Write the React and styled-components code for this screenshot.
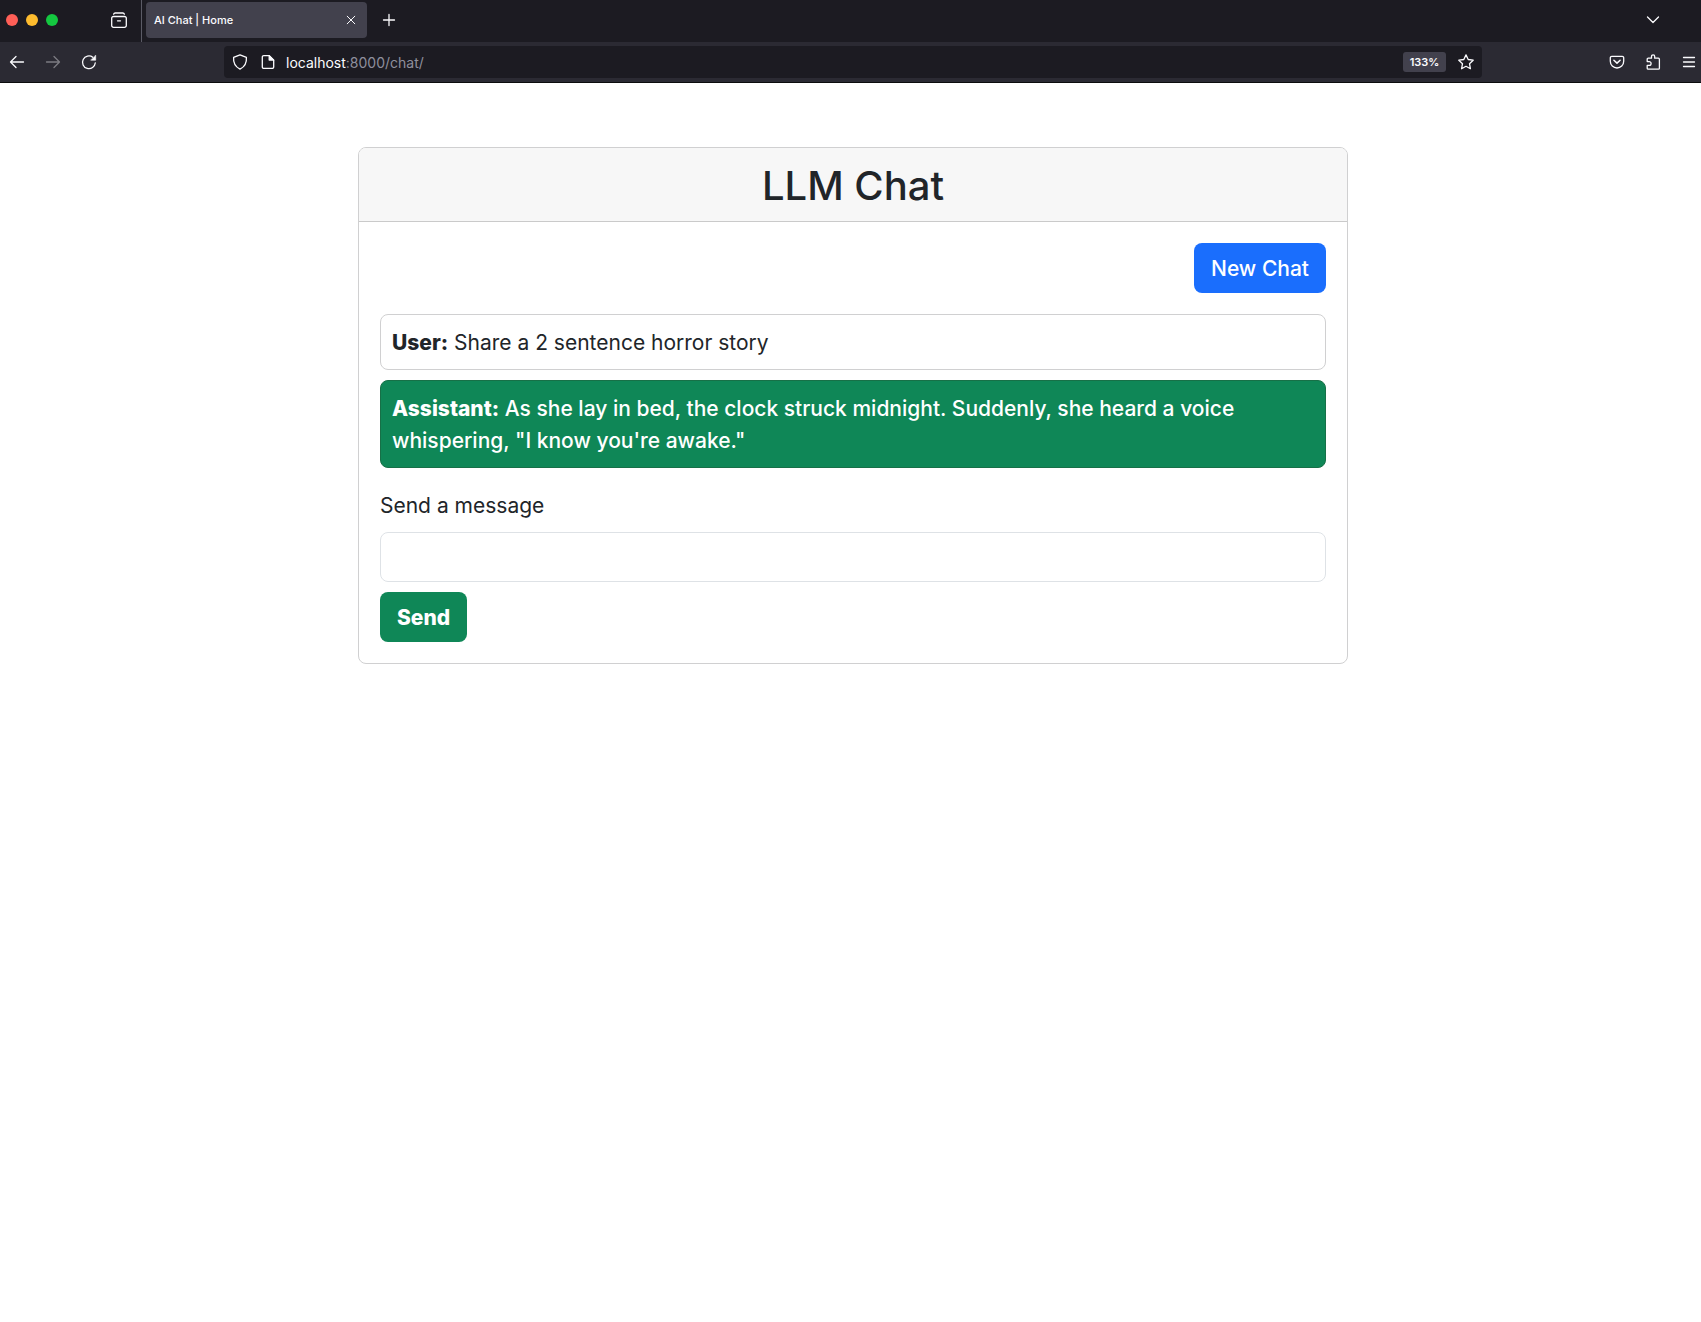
import React, { useState } from "react";
import styled, { createGlobalStyle } from "styled-components";

const GlobalStyle = createGlobalStyle`
  *, *::before, *::after { box-sizing: border-box; }
  body {
    margin: 0;
    background: #fff;
    color: #212529;
    font-family: Inter, "Liberation Sans", sans-serif;
    font-size: 21px;
    line-height: 32px;
  }
  button, input { font: inherit; }
`;

const TabBar = styled.div`
  display: flex;
  align-items: center;
  height: 42px;
  padding-bottom: 2px;
  background: #1c1b22;
  color: #fbfbfe;
`;

const WindowControls = styled.div`
  display: flex;
  gap: 8px;
  padding-left: 6px;
`;

const WindowDot = styled.button`
  width: 12px;
  height: 12px;
  padding: 0;
  border: 0;
  border-radius: 50%;
  background: ${(p) => p.$color};
`;

const IconButton = styled.button`
  display: flex;
  align-items: center;
  justify-content: center;
  flex: none;
  width: ${(p) => p.$width || 36}px;
  height: 32px;
  padding: 0;
  border: 0;
  background: none;
  color: #fbfbfe;

  &:disabled { color: #7c7b82; }
`;

const ViewArea = styled.div`
  display: flex;
  align-items: center;
  align-self: flex-start;
  height: 42px;
  margin-left: 43px;
  padding: 0 4px 2px 0;
  border-right: 1px solid #5b5b66;
`;

const Tab = styled.div`
  display: flex;
  align-items: center;
  justify-content: space-between;
  width: 221px;
  height: 36px;
  margin: 0 4px;
  padding-left: 8px;
  border-radius: 4px;
  background: #42414d;
  font-size: 11px;
  font-weight: 500;
  line-height: 16px;
`;

const TabListButton = styled.div`
  margin-left: auto;
  padding-right: 30px;
`;

const Toolbar = styled.div`
  display: flex;
  align-items: center;
  height: 41px;
  border-bottom: 1px solid #0c0c0d;
  background: #2b2a33;
  color: #fbfbfe;
`;

const NavButtons = styled.div`
  display: flex;
  flex: none;
  gap: 2px;
  width: 224px;
`;

const AddressBar = styled.div`
  display: flex;
  flex: 1;
  align-items: center;
  height: 32px;
  padding-left: 2px;
  border-radius: 4px;
  background: #1c1b22;
  font-size: 14px;
  line-height: 20px;
`;

const Address = styled.a`
  flex: 1;
  padding: 2px 0 0 4px;
  color: #8f8f9d;
  text-decoration: none;
`;

const Host = styled.span`
  color: #fbfbfe;
`;

const ZoomBadge = styled.button`
  width: 43px;
  height: 20px;
  margin-right: 4px;
  padding: 0;
  border: 0;
  border-radius: 3px;
  background: #42414d;
  color: #fbfbfe;
  font-size: 11px;
  font-weight: 600;
  line-height: 20px;
`;

const ToolbarActions = styled.div`
  display: flex;
  flex: none;
  gap: 12px;
  justify-content: flex-end;
  width: 219px;
`;

const Page = styled.main`
  display: flex;
  justify-content: center;
  padding: 64px 0 64px 5px;
`;

const Card = styled.section`
  width: 100%;
  max-width: 990px;
  overflow: hidden;
  border: 1px solid #d0d0d1;
  border-radius: 8px;
`;

const CardHeader = styled.header`
  padding: 12px 21px 10px;
  border-bottom: 1px solid #cacaca;
  background: #f7f7f7;
  text-align: center;
`;

const Title = styled.h1`
  margin: 0;
  font-size: 40px;
  font-weight: 500;
  line-height: 51px;
`;

const CardBody = styled.div`
  display: flex;
  flex-direction: column;
  gap: 21px;
  padding: 21px;
`;

const Button = styled.button`
  align-self: ${(p) => p.$align || "flex-start"};
  height: 50px;
  padding: 2px 17px 0;
  border: 0;
  border-radius: 8px;
  background: ${(p) => p.$color};
  color: #fff;
  font-weight: ${(p) => p.$weight};
`;

const Messages = styled.div`
  display: flex;
  flex-direction: column;
  gap: 10px;
`;

const Message = styled.div`
  padding: 12px 11px 10px;
  border: 1px solid ${(p) => (p.$assistant ? "#177047" : "#d0d0d1")};
  border-radius: 8px;
  background: ${(p) => (p.$assistant ? "#0f8757" : "#fff")};
  color: ${(p) => (p.$assistant ? "#fff" : "#212529")};
  font-weight: ${(p) => (p.$assistant ? 500 : 400)};
`;

const Sender = styled.strong`
  font-weight: 800;
`;

const Form = styled.form`
  display: flex;
  flex-direction: column;
  gap: 10px;
`;

const Label = styled.label`
  padding-top: 1px;
`;

const TextBox = styled.input`
  width: 100%;
  height: 50px;
  padding: 8px 16px;
  border: 1px solid #dee2e6;
  border-radius: 8px;
  background: #fff;
  color: #212529;
`;

const Icon = ({ children, size = 16 }) => (
  <svg
    width={size}
    height={size}
    viewBox="0 0 16 16"
    fill="none"
    stroke="currentColor"
    strokeWidth="1.3"
    strokeLinecap="round"
    strokeLinejoin="round"
    aria-hidden="true"
  >
    {children}
  </svg>
);

const messages = [
  { role: "User", text: "Share a 2 sentence horror story" },
  {
    role: "Assistant",
    text: 'As she lay in bed, the clock struck midnight. Suddenly, she heard a voice whispering, "I know you\'re awake."',
  },
];

function BrowserChrome() {
  return (
    <div>
      <TabBar>
        <WindowControls>
          <WindowDot $color="#ff5f57" aria-label="Close window" />
          <WindowDot $color="#febc2e" aria-label="Minimize window" />
          <WindowDot $color="#14c840" aria-label="Zoom window" />
        </WindowControls>
        <ViewArea>
          <IconButton aria-label="View recent browsing">
            <Icon>
              <path d="M2.500 4.500h11a1.800 1.800 0 0 1 1.800 1.800v7.200a1.800 1.800 0 0 1-1.800 1.800h-11a1.800 1.800 0 0 1-1.800-1.800V6.300a1.800 1.800 0 0 1 1.800-1.800z" />
              <path d="M2.600 2.200Q3 1 4.200 1h7.600Q13 1 13.400 2.200M6.500 8.800h3" />
            </Icon>
          </IconButton>
        </ViewArea>
        <Tab>
          AI Chat | Home
          <IconButton $width={32} aria-label="Close tab">
            <Icon>
              <path d="M4.200 4.200l7.600 7.600M11.800 4.200l-7.600 7.600" strokeWidth="1" />
            </Icon>
          </IconButton>
        </Tab>
        <IconButton aria-label="New tab">
          <Icon>
            <path d="M8 2.500v11M2.500 8h11" />
          </Icon>
        </IconButton>
        <TabListButton>
          <IconButton aria-label="List all tabs">
            <Icon>
              <path d="M2.500 5l5.500 5.500L13.500 5" />
            </Icon>
          </IconButton>
        </TabListButton>
      </TabBar>
      <Toolbar>
        <NavButtons>
          <IconButton $width={34} aria-label="Back">
            <Icon>
              <path d="M14.500 8h-13M7 2.500L1.500 8 7 13.500" />
            </Icon>
          </IconButton>
          <IconButton $width={34} aria-label="Forward" disabled>
            <Icon>
              <path d="M1.500 8h13M9 2.500L14.500 8 9 13.500" />
            </Icon>
          </IconButton>
          <IconButton $width={34} aria-label="Reload">
            <Icon>
              <path d="M14.300 8.800A6.400 6.400 0 1 1 11.800 3.200" />
              <path d="M14.700 1.500v4.700h-4.700z" fill="currentColor" strokeWidth=".6" />
            </Icon>
          </IconButton>
        </NavButtons>
        <AddressBar>
          <IconButton $width={28} aria-label="Tracking protection">
            <Icon>
              <path d="M8 .8l6.400 2.600c.4 4.600-1.400 9.200-6.400 11.800C3 12.600 1.200 8 1.600 3.400z" />
            </Icon>
          </IconButton>
          <IconButton $width={28} aria-label="Site information">
            <Icon>
              <path d="M3.800 1.600h5.400l4.500 4.500v6.800a1.500 1.500 0 0 1-1.500 1.500H3.800a1.500 1.500 0 0 1-1.500-1.500V3.100a1.500 1.500 0 0 1 1.500-1.500z" />
              <path d="M9.200 1.600v4.500h4.500z" fill="currentColor" />
            </Icon>
          </IconButton>
          <Address href="#chat">
            <Host>localhost</Host>:8000/chat/
          </Address>
          <ZoomBadge>133%</ZoomBadge>
          <IconButton $width={32} aria-label="Bookmark this page">
            <Icon>
              <path d="M8 .9l2.200 4.600 5 .7-3.700 3.500.9 5L8 12.300l-4.400 2.400.9-5L.8 6.200l5-.7z" />
            </Icon>
          </IconButton>
        </AddressBar>
        <ToolbarActions>
          <IconButton $width={24} aria-label="Save to Pocket">
            <Icon>
              <path d="M2.800 2.300h10.400a1.500 1.500 0 0 1 1.500 1.500v3.500a6.700 6.700 0 0 1-13.400 0V3.800a1.500 1.500 0 0 1 1.500-1.500z" />
              <path d="M4.900 6.200L8 9.100l3.100-2.900" strokeWidth="1.500" />
            </Icon>
          </IconButton>
          <IconButton $width={24} aria-label="Extensions">
            <Icon>
              <path d="M2.200 7.600V5.200a1 1 0 0 1 1-1h3.300V2.400a1.600 1.600 0 0 1 3.200 0v1.800h3.700a1 1 0 0 1 1 1v9a1 1 0 0 1-1 1H3.200a1 1 0 0 1-1-1v-2.800h2a1.900 1.900 0 0 0 0-3.800z" />
            </Icon>
          </IconButton>
          <IconButton $width={24} aria-label="Open application menu">
            <Icon>
              <path d="M2.500 3.500h11M2.500 8h11M2.500 12.500h11" />
            </Icon>
          </IconButton>
        </ToolbarActions>
      </Toolbar>
    </div>
  );
}

export default function App() {
  const [draft, setDraft] = useState("");

  return (
    <>
      <GlobalStyle />
      <BrowserChrome />
      <Page>
        <Card>
          <CardHeader>
            <Title>LLM Chat</Title>
          </CardHeader>
          <CardBody>
            <Button type="button" $color="#1a6efd" $weight={500} $align="flex-end">
              New Chat
            </Button>
            <Messages>
              {messages.map((m) => (
                <Message key={m.role} $assistant={m.role === "Assistant"}>
                  <Sender>{m.role}:</Sender> {m.text}
                </Message>
              ))}
            </Messages>
            <Form onSubmit={(e) => e.preventDefault()}>
              <Label htmlFor="message">Send a message</Label>
              <TextBox
                id="message"
                value={draft}
                onChange={(e) => setDraft(e.target.value)}
              />
              <Button type="submit" $color="#0f8757" $weight={800}>
                Send
              </Button>
            </Form>
          </CardBody>
        </Card>
      </Page>
    </>
  );
}
